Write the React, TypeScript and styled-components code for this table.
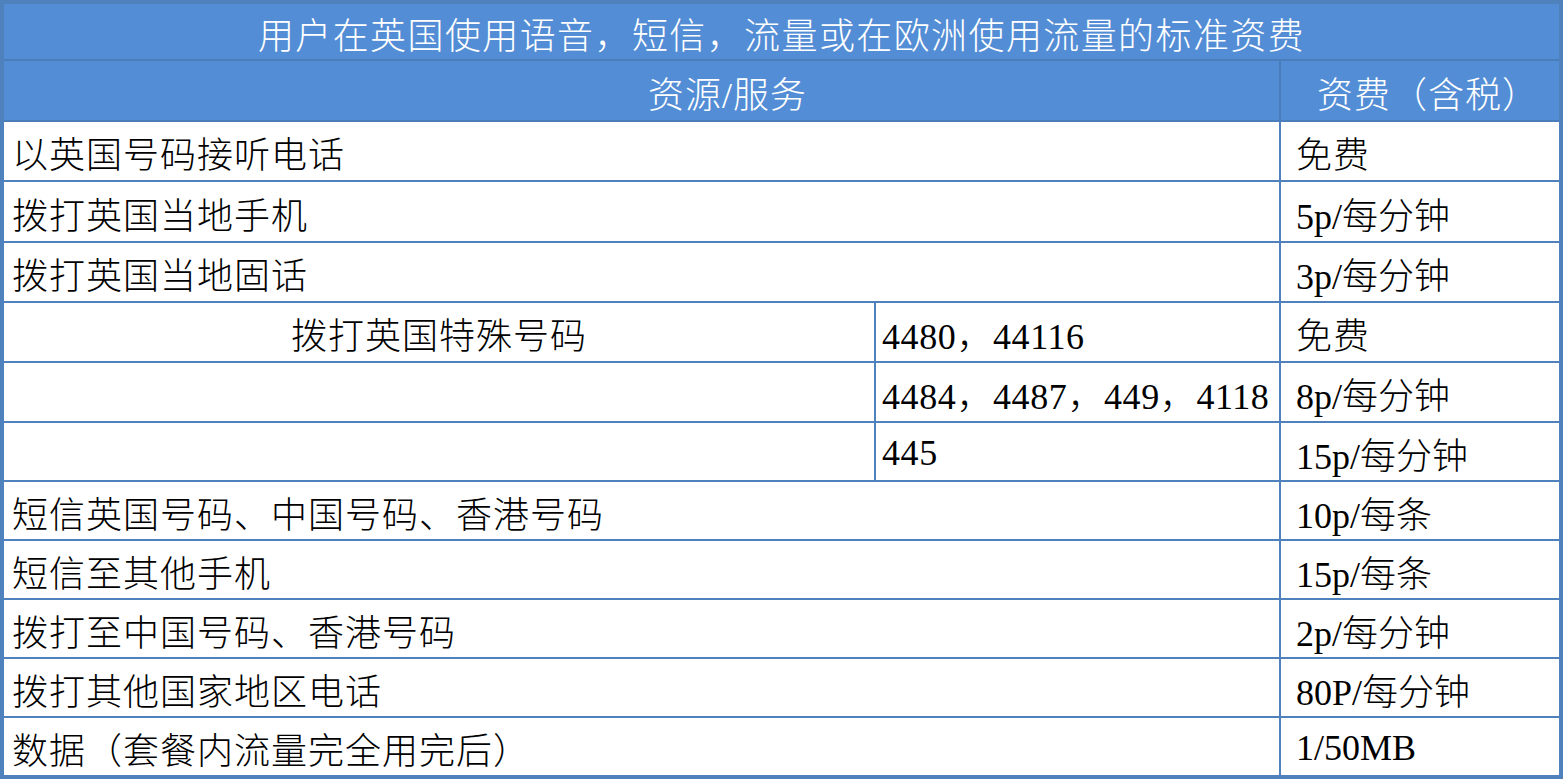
import { FC } from "react";
import styled, { createGlobalStyle } from "styled-components";

const GlobalStyle = createGlobalStyle`
  html, body {
    margin: 0;
    padding: 0;
    background: #ffffff;
  }
`;

const ROW_HEIGHTS = [57, 61, 60, 61, 60, 60, 60, 59, 59, 59, 59, 59, 57];

const Sheet = styled.div`
  display: grid;
  grid-template-columns: 872px 405px 278px;
  grid-template-rows: ${ROW_HEIGHTS.map((h) => `${h}px`).join(" ")};
  width: 1563px;
  height: 779px;
  box-sizing: border-box;
  border: 4px solid #4f81bd;
  background: #ffffff;
  font-family: "Liberation Serif", "Noto Sans CJK SC", serif;
  font-size: 36px;
  color: #000000;
`;

interface CellProps {
  $span?: number;
  $align?: "left" | "center";
  $pad?: number;
  $head?: boolean;
  $noRight?: boolean;
  $noBottom?: boolean;
  $spacing?: number;
}

const Cell = styled.div<CellProps>`
  grid-column: span ${(p) => p.$span || 1};
  display: flex;
  align-items: center;
  justify-content: ${(p) => (p.$align === "center" ? "center" : "flex-start")};
  box-sizing: border-box;
  padding-left: ${(p) => p.$pad ?? 0}px;
  padding-top: 2px;
  white-space: nowrap;
  overflow: hidden;
  letter-spacing: ${(p) => p.$spacing ?? 1}px;
  font-weight: 300;
  background: ${(p) => (p.$head ? "#538dd5" : "#ffffff")};
  color: ${(p) => (p.$head ? "#ffffff" : "#000000")};
  border-right: ${(p) =>
    p.$noRight ? "none" : `2px solid ${p.$head ? "#4a7ebb" : "#4f81bd"}`};
  border-bottom: ${(p) =>
    p.$noBottom ? "none" : `2px solid ${p.$head ? "#4a7ebb" : "#4f81bd"}`};
`;

interface Row {
  service: string;
  code?: string;
  price: string;
  centered?: boolean;
}

const rows: Row[] = [
  { service: "以英国号码接听电话", price: "免费" },
  { service: "拨打英国当地手机", price: "5p/每分钟" },
  { service: "拨打英国当地固话", price: "3p/每分钟" },
  { service: "拨打英国特殊号码", code: "4480，44116", price: "免费", centered: true },
  { service: "", code: "4484，4487，449，4118", price: "8p/每分钟" },
  { service: "", code: "445", price: "15p/每分钟" },
  { service: "短信英国号码、中国号码、香港号码", price: "10p/每条" },
  { service: "短信至其他手机", price: "15p/每条" },
  { service: "拨打至中国号码、香港号码", price: "2p/每分钟" },
  { service: "拨打其他国家地区电话", price: "80P/每分钟" },
  { service: "数据（套餐内流量完全用完后）", price: "1/50MB" },
];

const priceSpacing = (price: string) => (/^\d/.test(price) ? 0 : 1);

const RateTable: FC = () => {
  return (
    <Sheet>
      <Cell $head $span={3} $align="center" $noRight $spacing={1.4}>
        用户在英国使用语音，短信，流量或在欧洲使用流量的标准资费
      </Cell>
      <Cell $head $span={2} $align="center" $pad={172}>
        资源/服务
      </Cell>
      <Cell $head $align="center" $pad={16} $noRight>
        资费（含税）
      </Cell>
      {rows.map((row, i) => {
        const last = i === rows.length - 1;
        if (row.code !== undefined) {
          return [
            <Cell
              key={`s${i}`}
              $align={row.centered ? "center" : "left"}
              $pad={row.centered ? 0 : 8}
            >
              {row.service}
            </Cell>,
            <Cell key={`c${i}`} $pad={6} $spacing={0.6}>
              {row.code}
            </Cell>,
            <Cell key={`p${i}`} $pad={15} $noRight $spacing={priceSpacing(row.price)}>
              {row.price}
            </Cell>,
          ];
        }
        return [
          <Cell key={`s${i}`} $span={2} $pad={8} $noBottom={last}>
            {row.service}
          </Cell>,
          <Cell
            key={`p${i}`}
            $pad={15}
            $noRight
            $noBottom={last}
            $spacing={priceSpacing(row.price)}
          >
            {row.price}
          </Cell>,
        ];
      })}
    </Sheet>
  );
};

const App: FC = () => {
  return (
    <>
      <GlobalStyle />
      <RateTable />
    </>
  );
};

export default App;
